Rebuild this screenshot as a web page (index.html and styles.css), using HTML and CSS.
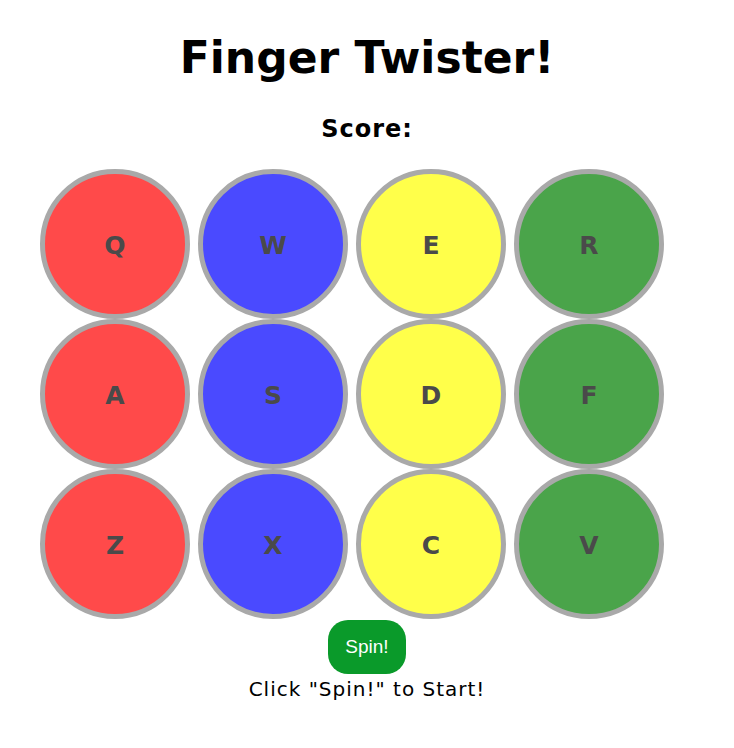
FILE: index.html
```html
<!DOCTYPE html>
<html>
<head>
<meta charset="utf-8">
<title>Finger Twister!</title>
<link rel="stylesheet" href="styles.css">
</head>
<body>
<main class="page">
  <h1 class="title">Finger Twister!</h1>
  <h2 class="score">Score:</h2>
  <div class="board">
    <div class="spot red">Q</div>
    <div class="spot blue">W</div>
    <div class="spot yellow">E</div>
    <div class="spot green">R</div>
    <div class="spot red">A</div>
    <div class="spot blue">S</div>
    <div class="spot yellow">D</div>
    <div class="spot green">F</div>
    <div class="spot red">Z</div>
    <div class="spot blue">X</div>
    <div class="spot yellow">C</div>
    <div class="spot green">V</div>
  </div>
  <div class="controls">
    <button class="spin">Spin!</button>
    <p class="status">Click "Spin!" to Start!</p>
  </div>
</main>
</body>
</html>
```
FILE: styles.css
```css
html, body {
  margin: 0;
  padding: 0;
  background: #fff;
}
.page {
  padding-top: 32px;
  font-family: "DejaVu Sans", Verdana, sans-serif;
  color: #000;
  text-align: center;
}
.title {
  margin: 0;
  font-size: 44px;
  font-weight: bold;
  line-height: 51px;
}
.score {
  margin: 32px 0 0;
  font-size: 24px;
  font-weight: bold;
  line-height: 28px;
  letter-spacing: 1px;
}
.board {
  margin-top: 26px;
  padding-left: 40px;
  display: grid;
  grid-template-columns: repeat(4, 150px);
  column-gap: 8px;
  row-gap: 0;
}
.spot {
  box-sizing: border-box;
  width: 150px;
  height: 150px;
  border: 5px solid #a9a9a9;
  border-radius: 50%;
  display: flex;
  align-items: center;
  justify-content: center;
  padding-top: 2px;
  font-family: "DejaVu Sans", Verdana, sans-serif;
  font-weight: bold;
  font-size: 25px;
  color: #4a4a4a;
}
.red { background: #ff4a4a; }
.blue { background: #4a4aff; }
.yellow { background: #ffff4a; }
.green { background: #4aa44a; }
.controls {
  display: flex;
  flex-direction: column;
  align-items: center;
  margin-top: 1px;
}
.spin {
  border: none;
  background: #0a9a2a;
  color: #fff;
  font-family: "Liberation Sans", Arial, sans-serif;
  font-size: 19px;
  line-height: 22px;
  padding: 16px 17px;
  border-radius: 20px;
}
.status {
  margin: 4px 0 0;
  font-size: 20px;
  line-height: 23px;
  letter-spacing: 1px;
}
```
